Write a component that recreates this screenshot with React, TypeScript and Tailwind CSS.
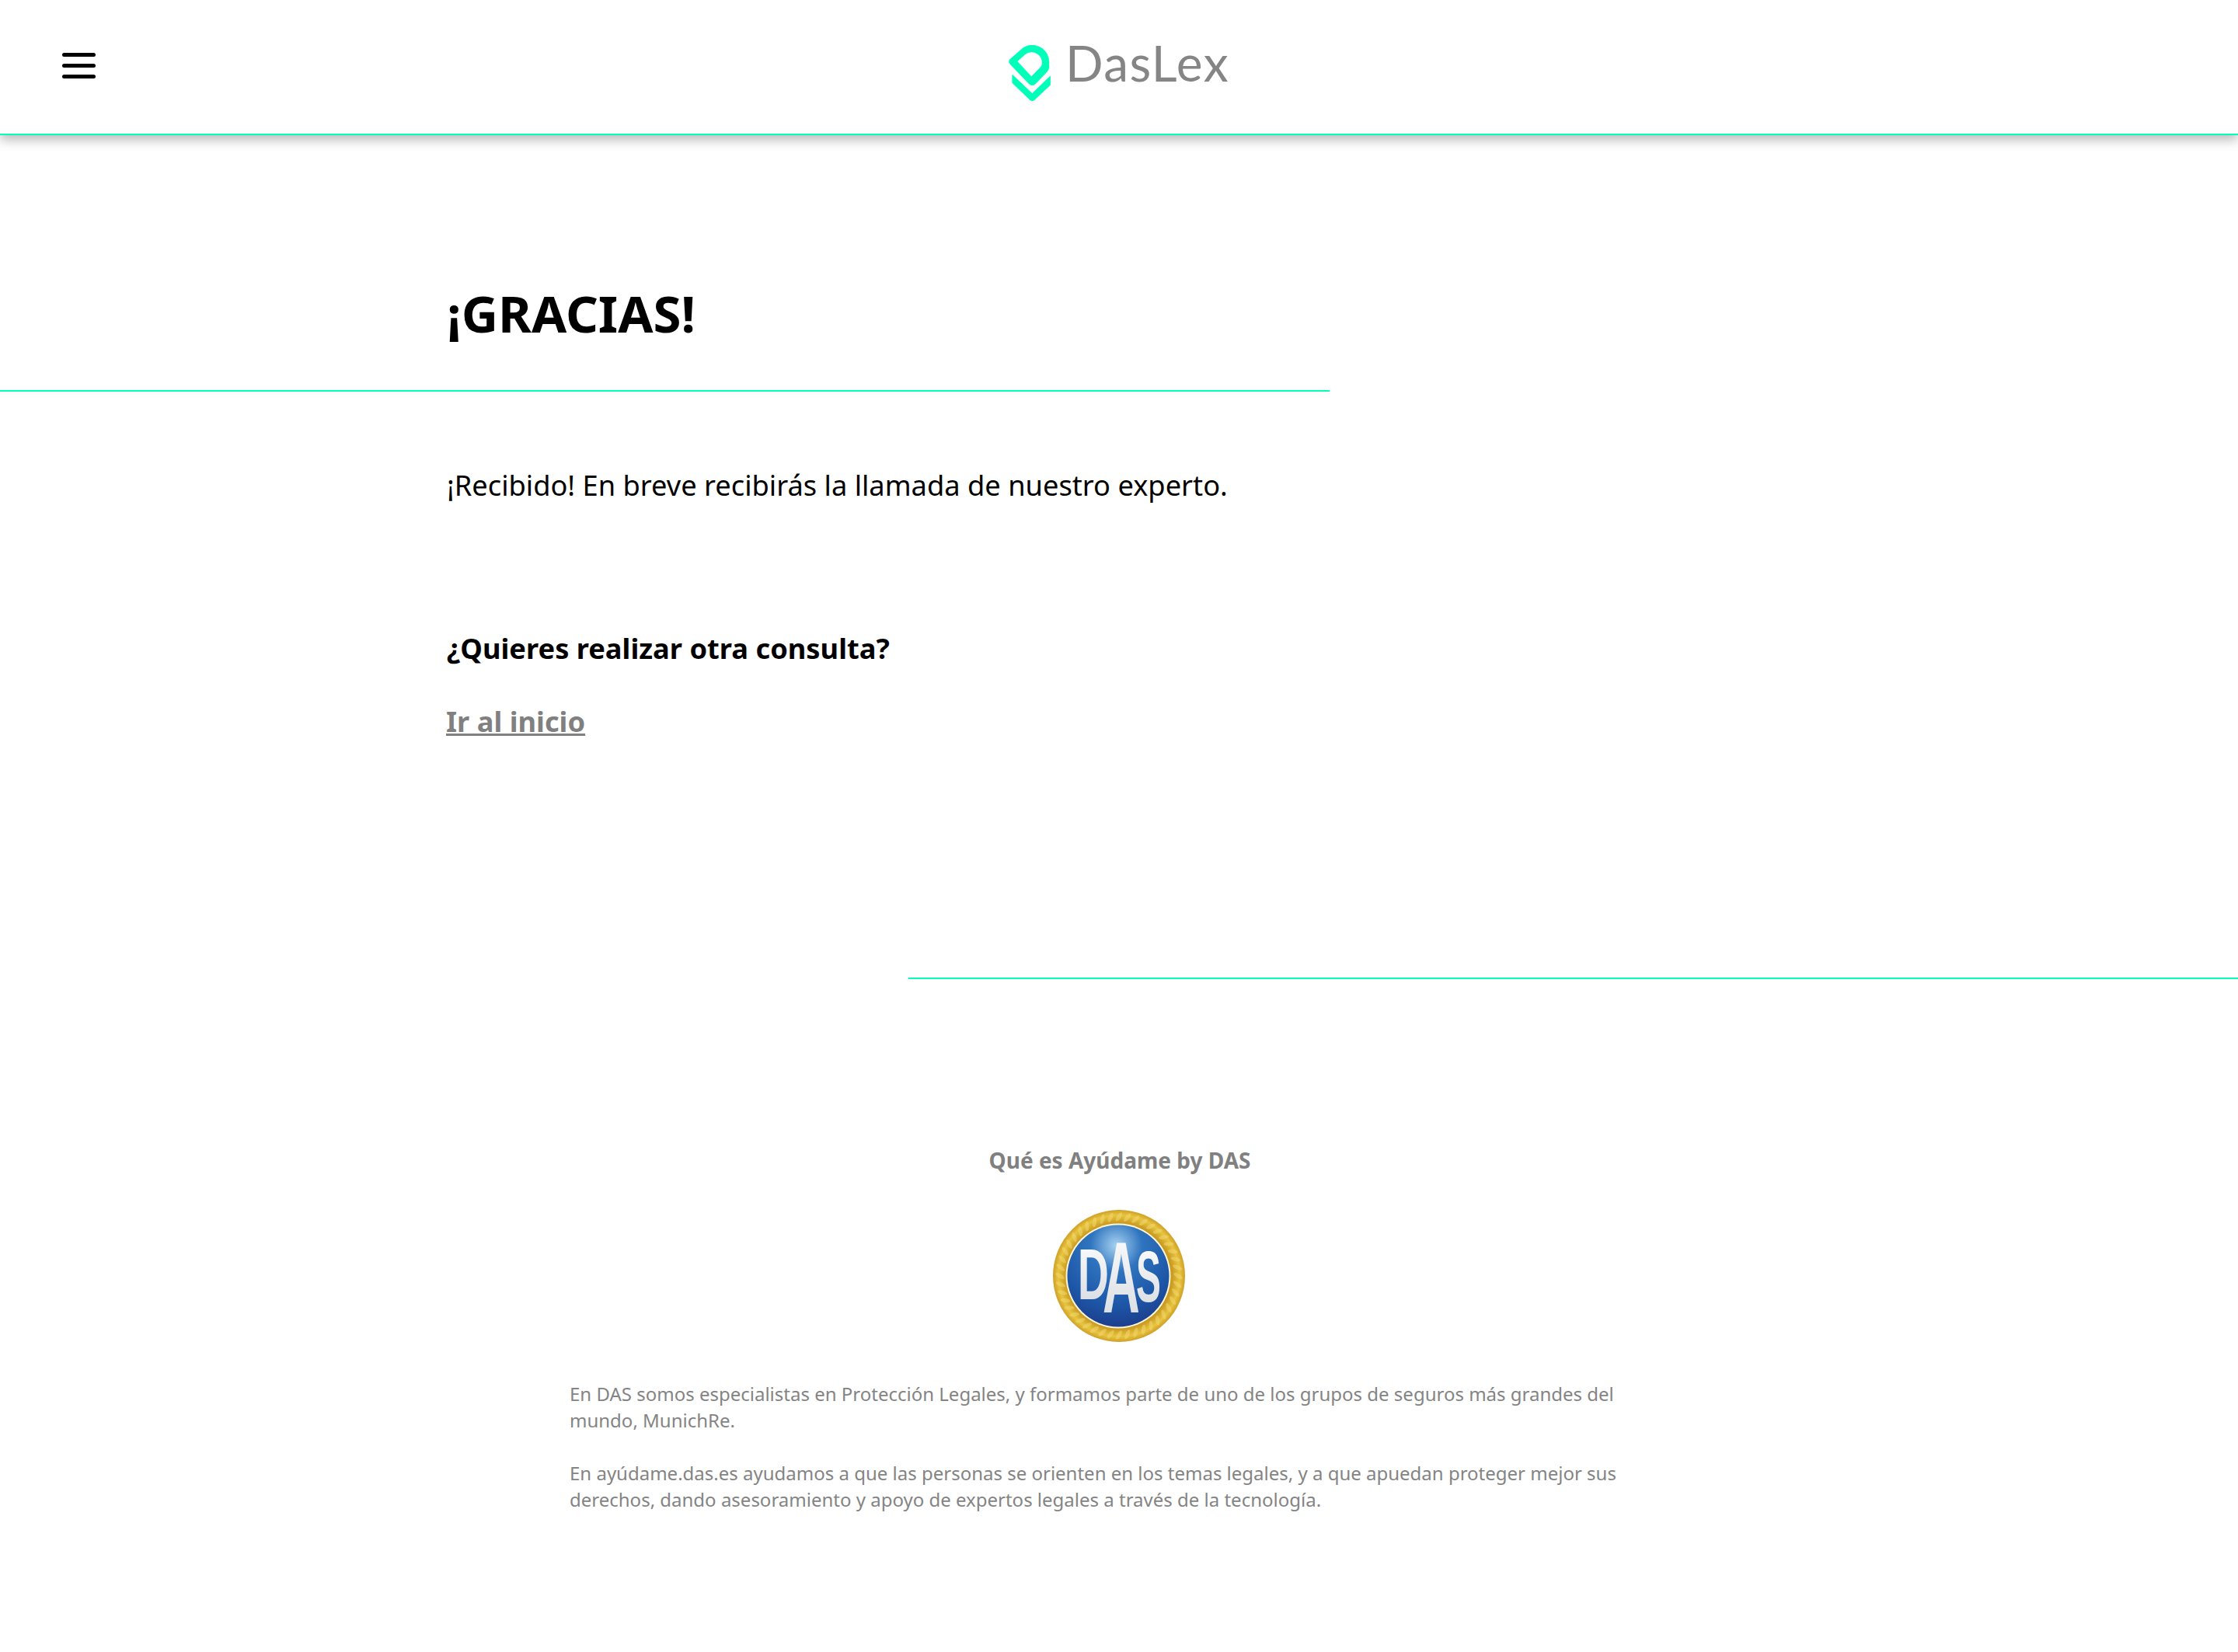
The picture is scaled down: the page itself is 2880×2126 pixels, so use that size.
import React from "react";

function Logo() {
  return (
    <svg width="54" height="73" viewBox="84 85 162 220" className="block">
      <path
        fillRule="evenodd"
        fill="#00ffb9"
        d="M88 140 L140 95 Q175 72 215 98 Q242 120 241 155 L241 172 Q240 182 232 190 L188 236 Q175 248 162 236 L90 160 Q80 150 88 140 Z M118 148 L172 206 L206 172 Q213 164 213 155 Q213 132 195 120 Q172 104 150 120 Z"
      />
      <path fill="#00ffb9" d="M97 198 L175 272 L246 203 L246 240 L184 298 Q175 306 166 298 L97 232 Z" />
    </svg>
  );
}

function DasBadge() {
  const leaves = Array.from({ length: 44 }, (_, i) => i * (360 / 44));
  const letter = { fontFamily: "'Liberation Sans', sans-serif", fontWeight: 700, fontSize: 92, fill: "url(#silver)", textAnchor: "middle" as const };
  return (
    <svg width="172" height="170" viewBox="0 0 172 170" className="block">
      <defs>
        <radialGradient id="gold" cx="50%" cy="50%" r="50%">
          <stop offset="80%" stopColor="#c99a20" />
          <stop offset="92%" stopColor="#e8c53f" />
          <stop offset="100%" stopColor="#cfa026" />
        </radialGradient>
        <radialGradient id="blue" cx="48%" cy="20%" r="85%">
          <stop offset="0%" stopColor="#a6d2f0" />
          <stop offset="30%" stopColor="#2f74bf" />
          <stop offset="70%" stopColor="#1d55a6" />
          <stop offset="100%" stopColor="#1c3a88" />
        </radialGradient>
        <linearGradient id="silver" x1="0" y1="0" x2="0" y2="1">
          <stop offset="0%" stopColor="#ffffff" />
          <stop offset="100%" stopColor="#d4d8de" />
        </linearGradient>
      </defs>
      <circle cx="86" cy="85" r="85" fill="url(#gold)" />
      {leaves.map((a) => (
        <ellipse
          key={a}
          cx="86"
          cy="9"
          rx="2.6"
          ry="6.5"
          fill="#f3d978"
          opacity="0.5"
          transform={`rotate(${a} 86 85) rotate(32 86 9)`}
        />
      ))}
      <circle cx="85" cy="85" r="67.5" fill="#fdf6d6" />
      <circle cx="85" cy="85" r="65.5" fill="url(#blue)" />
      <text {...letter} transform="translate(53 115) scale(0.6 1)">D</text>
      <text {...letter} transform="translate(124 118) scale(0.52 1)">S</text>
      <text {...letter} transform="translate(89 132) scale(0.72 1.42)">A</text>
    </svg>
  );
}

export default function App() {
  return (
    <div className="min-h-[2126px] bg-white text-black font-['Noto_Sans',sans-serif]">
      <header className="relative h-[174px] border-b-2 border-[#00ffb9] bg-white shadow-[0_6px_14px_rgba(0,0,0,0.28)] flex justify-center pt-[58px]">
        <button className="absolute left-[80px] top-[68px] flex w-[43px] flex-col gap-[9px]" aria-label="Menú">
          <span className="block h-[5px] rounded-full bg-black" />
          <span className="block h-[5px] rounded-full bg-black" />
          <span className="block h-[5px] rounded-full bg-black" />
        </button>
        <div className="flex items-start">
          <Logo />
          <span className="ml-[19px] mt-[-17px] text-[64px] leading-[80px] tracking-[1.5px] font-normal text-[#858585] font-['Lato',sans-serif]">DasLex</span>
        </div>
      </header>

      <main>
        <div className="h-[330px] w-[1711px] border-b-2 border-[#00ffb9] pl-[575px] pt-[185px]">
          <h1 className="text-[65.4px] leading-[88px] font-bold">¡GRACIAS!</h1>
        </div>
        <div className="pl-[575px] pt-[92px]">
          <p className="text-[36.25px] leading-[56px]">¡Recibido! En breve recibirás la llamada de nuestro experto.</p>
          <p className="mt-[154px] text-[36.25px] leading-[56px] font-bold">¿Quieres realizar otra consulta?</p>
          <a href="#" className="mt-[38px] ml-[-1px] block w-fit text-[36.25px] leading-[56px] font-bold text-[#808080] underline">Ir al inicio</a>
        </div>
        <div className="ml-[1169px] mt-[302px] h-[2px] bg-[#00ffb9]" />
      </main>

      <footer className="pt-[211px]">
        <h2 className="text-center text-[28px] leading-[44px] font-bold text-[#808080] pl-[2px]">Qué es Ayúdame by DAS</h2>
        <div className="mt-[42px] flex justify-center">
          <DasBadge />
        </div>
        <div className="mx-auto mt-[50px] w-[1414px] text-[24px] leading-[34px] text-[#848484]">
          <p>En DAS somos especialistas en Protección Legales, y formamos parte de uno de los grupos de seguros más grandes del mundo, MunichRe.</p>
          <p className="mt-[34px]">En ayúdame.das.es ayudamos a que las personas se orienten en los temas legales, y a que apuedan proteger mejor sus derechos, dando asesoramiento y apoyo de expertos legales a través de la tecnología.</p>
        </div>
      </footer>
    </div>
  );
}
